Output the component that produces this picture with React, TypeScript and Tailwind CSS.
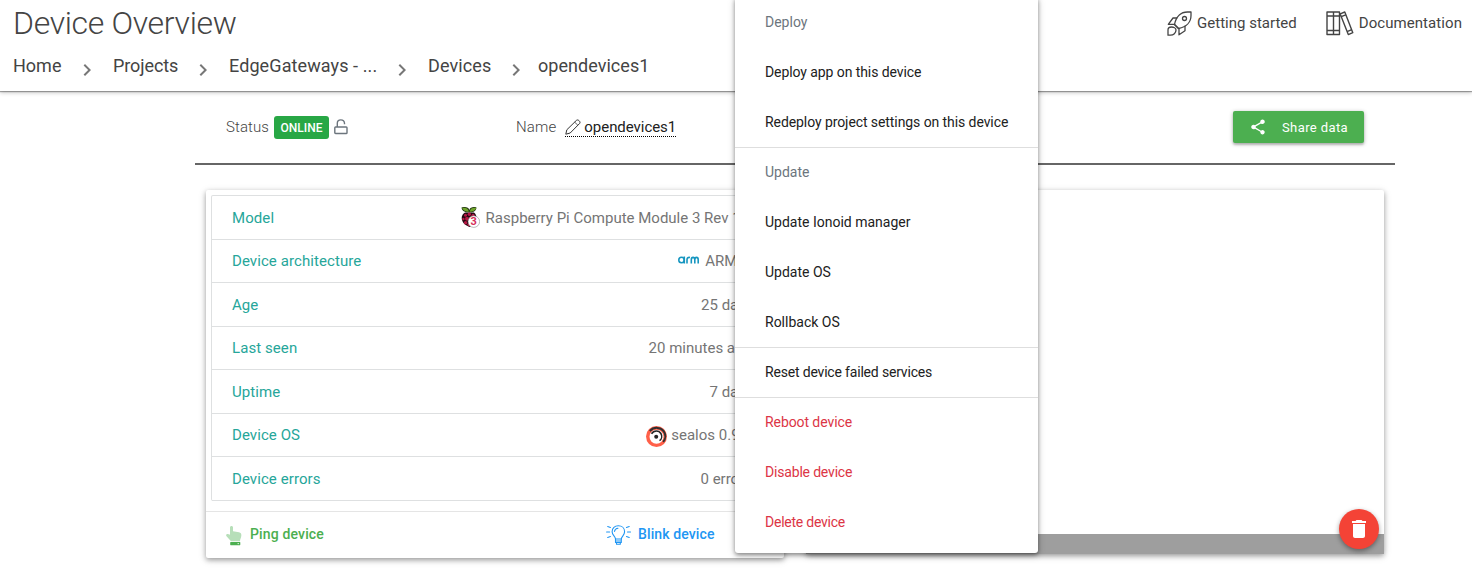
import type { ReactNode } from "react";
import { MdChevronRight, MdDelete, MdShare } from "react-icons/md";

function RocketIcon() {
  return (
    <svg className="size-[25px] shrink-0" viewBox="0 0 25 25" fill="none" stroke="#444" strokeWidth="1.3" strokeLinejoin="round">
      <path d="M7.500 13.500C9 5.500 14 1 20.500 1H24v3.500c0 6.500-4.500 11.500-12.500 13z" />
      <path d="M7.500 13.500l4 4" />
      <circle cx="17.500" cy="7.500" r="2" />
      <path d="M10.300 7H6L1.300 13.300h6.200M18 14.700v5L12 23.800v-6.300M1 24.200V19c0-2 1.500-3 3.500-3S9 17.200 9 19c0 3-2.500 5.200-5.500 5.200z" />
    </svg>
  );
}

function BooksIcon() {
  return (
    <svg className="h-[25px] w-[28px] shrink-0" viewBox="0 0 28 25" fill="none" stroke="#444" strokeWidth="1.4" strokeLinejoin="round">
      <path d="M1 1h6.500v22.500H1zM7.500 1h6v22.500h-6zM1 5h12.500M1 19.500h12.500M14.200 2.900l4.600-1.900 8 20.700-4.500 1.900z" />
      <path d="M15.200 5.700l4.600-1.900M21.100 20.600l4.600-1.900" />
    </svg>
  );
}

function LockIcon() {
  return (
    <svg className="h-[16px] w-[14px]" viewBox="0 0 14 16" fill="none" stroke="#6c757d" strokeWidth="1.400">
      <rect x=".8" y="8" width="12.200" height="6.500" rx=".8" />
      <path d="M3.300 8V4.300c0-4.600 6.900-4.600 7.200 0v1" />
    </svg>
  );
}

function PencilIcon() {
  return (
    <svg className="size-4" viewBox="0 0 16 16" fill="none" stroke="#333" strokeWidth="1" strokeLinejoin="round">
      <path d="M.8 15.200l1-4.400L11.500 1.300c1.400-1.300 4.500 1.400 3.200 3.100L5.200 14z" />
      <path d="M9.700 3.200l3.100 3" strokeWidth=".8" />
    </svg>
  );
}

function RaspberryIcon() {
  return (
    <svg className="h-[21px] w-[19px]" viewBox="0 0 19 21">
      <path d="M8.300 5.300C3.500 5.800.8 3.500.5.500 4.500-.3 7.500 0 8.300 3 9.200 0 12.500-.3 15.500.5 15.200 3.500 13 5.800 8.300 5.300z" fill="#263a14" />
      <path d="M7.800 4.700C4.500 4.700 1.800 3.200 1.200.9c3.200-.4 5.900.4 6.600 3.800zM8.700 4.700c.7-3.400 3.300-4.200 6.500-3.800-.6 2.300-3.200 3.800-6.500 3.800z" fill="#6fa52c" />
      <path d="M4 5.500h9c2 2 2.500 3 2.500 6 0 4-3 7-7 8.500-4-1.500-7.800-4.500-7.800-9 0-2.500 1.300-4.500 3.300-5.500z" fill="#210810" />
      <g fill="#b51643">
        <circle cx="8.300" cy="7.200" r="1.700" />
        <circle cx="4.500" cy="8.200" r="1.500" />
        <circle cx="12" cy="8.200" r="1.500" />
        <circle cx="6" cy="11.800" r="2" />
        <circle cx="2.400" cy="12" r="1.200" />
        <circle cx="4.600" cy="15.700" r="1.700" />
        <circle cx="8" cy="17.600" r="1.600" />
        <circle cx="10" cy="10.800" r="1.500" />
      </g>
      <circle cx="12.800" cy="14.600" r="5.800" fill="#fff" stroke="#777" strokeWidth=".5" />
      <text x="12.600" y="18.400" textAnchor="middle" fontSize="11" fontWeight="700" fill="#d52c59" fontFamily="Roboto, sans-serif">3</text>
    </svg>
  );
}

function ArmIcon() {
  return (
    <svg className="-mt-[2px] h-[8px] w-[21px]" viewBox="0 0 21 8" fill="none" stroke="#1696c0" strokeWidth="1.600">
      <circle cx="3.500" cy="4" r="2.700" />
      <path d="M6.300.5v7M9 7.500V3.800c0-2 1.300-2.700 3-2.300M13.300 7.500V3.800c0-3.200 3.500-3.200 3.500 0v3.700M16.800 3.800c0-3.200 3.400-3.200 3.400 0v3.700" />
    </svg>
  );
}

function SealIcon() {
  return (
    <svg className="mt-[2px] size-[21px]" viewBox="0 0 21 21" fill="none">
      <circle cx="10.500" cy="10.500" r="10.500" fill="#ff6049" />
      <circle cx="10.500" cy="10.800" r="7" fill="#fff" />
      <path d="M3.800 5C8 .4 14.800 1.200 17.800 5.300c2.100 3 2 7.400-.6 10.700" stroke="#303030" strokeWidth="2" />
      <path d="M5.500 7.800c2.400-3.700 7.400-3.700 9.400-.3 1.400 2.400.9 5.600-1.400 7.200" stroke="#252525" strokeWidth="1.600" />
      <circle cx="10.200" cy="10.800" r="2" fill="#252525" />
    </svg>
  );
}

function HandIcon() {
  return (
    <svg className="h-[20px] w-[16px]" viewBox="0 0 16 20">
      <path d="M4 1.500c0-2 3-2 3 0v3.700l6 1c2 .4 2.500 1.700 2.300 3.600-.1 2-1.300 3.200-1.300 5.500H5L.3 10C-.5 8 1.800 7.500 4 8.700z" fill="#b7dfb9" />
      <path d="M5 16h8.500c.8 0 .8.400.8 1v1.200c0 .6-.2 1-.8 1H5c-.6 0-.8-.4-.8-1V17c0-.6.200-1 .8-1z" fill="#4caf50" />
      <circle cx="12.200" cy="17.600" r=".7" fill="#fff" />
    </svg>
  );
}

function BulbIcon() {
  return (
    <svg className="h-[20px] w-[25px]" viewBox="0 0 25 20" fill="none" stroke="#2196f3" strokeWidth="1.100" strokeLinecap="round" strokeLinejoin="round">
      <path d="M9.500 14c0-2.600-3.400-4-3.400-7.300C6.100 3 8.800.8 12.300.8s6.300 2.300 6.300 6c0 3.400-3.300 4.800-3.300 7.200z" />
      <path d="M9.500 14v3.500h5.800V14M9.500 16h5.800M10.500 17.500v1.800h3.800v-1.800M8.500 6.500C8.700 4.600 10 3.400 12 3.200M1.700 1.500l2.700 1M.6 7h3M1.700 12.500l2.700-1M23.200 1.500l-2.700 1M21.500 7h3M23.200 12.500l-2.700-1" />
    </svg>
  );
}

function Separator({ className }: { className: string }) {
  return <MdChevronRight className={`mt-[8px] size-[24px] shrink-0 text-[#777] ${className}`} />;
}

function Row({ label, children }: { label: string; children: ReactNode }) {
  return (
    <div className="flex h-[43.55px] items-center justify-between border-b border-[#dee0e1] pt-px pr-[25px] pl-5 text-[15px]">
      <span className="tracking-[0.08px] text-[#26a69a]">{label}</span>
      <span className="flex items-center whitespace-nowrap text-[#757575]">{children}</span>
    </div>
  );
}

function MenuItem({ children, className = "tracking-[-0.08px] text-[#212121]" }: { children: ReactNode; className?: string }) {
  return <div className={`flex h-[50px] items-center pl-[30px] text-sm whitespace-nowrap ${className}`}>{children}</div>;
}

export default function App() {
  return (
    <div className="relative h-[579px] w-[1472px] overflow-hidden bg-white font-[Roboto,sans-serif] text-[#444]">
      <header className="flex h-[91px] justify-between bg-white shadow-[0_1px_1px_rgba(0,0,0,0.32),0_2px_4px_rgba(0,0,0,0.2)]">
        <div className="pl-[13px]">
          <h1 className="h-[48px] text-[32px] leading-[46px] font-light tracking-[-0.33px]">Device Overview</h1>
          <nav className="flex h-[36px] items-center text-[18px] leading-[36px] whitespace-nowrap">
            <span className="w-[49px]">Home</span>
            <Separator className="ml-[13px]" />
            <span className="ml-[14px] w-[66px] tracking-[-0.1px]">Projects</span>
            <Separator className="ml-[12px]" />
            <span className="ml-[14px] w-[149px] tracking-[0.1px]">EdgeGateways - ...</span>
            <Separator className="ml-[12px]" />
            <span className="ml-[14px] w-[64px] tracking-[0.1px]">Devices</span>
            <Separator className="ml-[12px]" />
            <span className="ml-[10px] tracking-[0.04px]">opendevices1</span>
          </nav>
        </div>
        <div className="flex h-[47px] items-center pr-[10px] text-[15px]">
          <RocketIcon />
          <span className="ml-[5px]">Getting started</span>
          <span className="ml-[29px] flex"><BooksIcon /></span>
          <span className="ml-[5px] tracking-[0.07px]">Documentation</span>
        </div>
      </header>

      <main className="ml-[195px] w-[1200px]">
        <section className="flex h-[74px] items-center border-b-2 border-[#666] pr-[31px] pl-[31px] text-[15px]">
          <div className="flex w-[290px] items-center">
            <span className="font-light tracking-[0.1px]">Status</span>
            <span className="ml-[5px] flex h-[23px] w-[55px] items-center justify-center rounded-[3px] bg-[#28a745] pt-px text-[12px] font-medium text-white">ONLINE</span>
            <span className="ml-[5px]"><LockIcon /></span>
          </div>
          <span className="font-light tracking-[0.15px]">Name</span>
          <span className="ml-[9px] flex h-[20px] items-center border-b border-dotted border-black text-[#212121]">
            <PencilIcon />
            <span className="ml-[3px] pt-px tracking-[-0.05px]">opendevices1</span>
          </span>
          <button className="ml-auto flex h-[32px] w-[131px] items-center rounded-[2px] bg-[#4caf50] pl-[16px] text-[13px] tracking-[0.4px] text-white shadow-[0_2px_2px_rgba(0,0,0,0.14),0_1px_4px_rgba(0,0,0,0.3)]">
            <MdShare className="size-[18px]" />
            <span className="ml-[15px] pt-[2px]">Share data</span>
          </button>
        </section>

        <section className="mt-[25px] flex items-start gap-[22px] pl-[11px]">
          <div className="h-[368px] w-[578px] rounded-[2px] bg-white pt-[5px] shadow-[0_2px_5px_rgba(0,0,0,0.32),0_2px_10px_rgba(0,0,0,0.12)]">
            <div className="mx-[5px] rounded-[2px] border-x border-t border-[#dee0e1]">
              <Row label="Model"><RaspberryIcon /><span className="ml-[6px]">Raspberry Pi Compute Module 3 Rev 1.0</span></Row>
              <Row label="Device architecture"><ArmIcon /><span className="ml-[6px]">ARMv7</span></Row>
              <Row label="Age">25 days</Row>
              <Row label="Last seen"><span className="mr-px">20 minutes ago</span></Row>
              <Row label="Uptime">7 days</Row>
              <Row label="Device OS"><SealIcon /><span className="mr-px ml-[4px]">sealos 0.9.0</span></Row>
              <Row label="Device errors"><span className="mr-px">0 errors</span></Row>
            </div>
            <div className="mt-[10px] flex h-[47px] items-center border-t border-[#e5e5e5] pb-[2px] pl-[20px] text-sm font-medium">
              <span className="mt-[4px]"><HandIcon /></span>
              <span className="ml-[8px] w-[74px] tracking-[0.15px] whitespace-nowrap text-[#4caf50]">Ping device</span>
              <span className="mt-[2px] ml-[282px]"><BulbIcon /></span>
              <span className="ml-[7px] tracking-[0.12px] text-[#2196f3]">Blink device</span>
            </div>
          </div>

          <div className="flex h-[364px] w-[578px] flex-col justify-end rounded-[2px] bg-white shadow-[0_2px_5px_rgba(0,0,0,0.32),0_2px_10px_rgba(0,0,0,0.12)]">
            <div className="h-[20px] bg-[#9e9e9e]" />
          </div>
        </section>
      </main>

      <button className="absolute top-[509px] left-[1339px] flex size-[40px] items-center justify-center rounded-full bg-[#f44336] text-white shadow-[0_2px_5px_rgba(0,0,0,0.4)]">
        <MdDelete className="size-[24px]" />
      </button>

      <div className="absolute top-[-3px] left-[735px] h-[556px] w-[303px] rounded-[3px] bg-white shadow-[0_2px_4px_rgba(0,0,0,0.4),0_2px_8px_rgba(0,0,0,0.16)]">
        <MenuItem className="text-[#6c757d]">Deploy</MenuItem>
        <MenuItem>Deploy app on this device</MenuItem>
        <MenuItem>Redeploy project settings on this device</MenuItem>
        <div className="border-t border-[#dedede]">
          <MenuItem className="-mt-px text-[#6c757d]">Update</MenuItem>
          <MenuItem className="text-[#212121]">Update Ionoid manager</MenuItem>
          <MenuItem className="text-[#212121]">Update OS</MenuItem>
          <MenuItem className="text-[#212121]">Rollback OS</MenuItem>
        </div>
        <div className="border-y border-[#dedede]">
          <MenuItem className="-mt-px tracking-[-0.18px] text-[#212121]">Reset device failed services</MenuItem>
        </div>
        <MenuItem className="-mt-px tracking-[-0.08px] text-[#dc3545]">Reboot device</MenuItem>
        <MenuItem className="tracking-[-0.18px] text-[#dc3545]">Disable device</MenuItem>
        <MenuItem className="tracking-[-0.24px] text-[#dc3545]">Delete device</MenuItem>
      </div>
    </div>
  );
}
